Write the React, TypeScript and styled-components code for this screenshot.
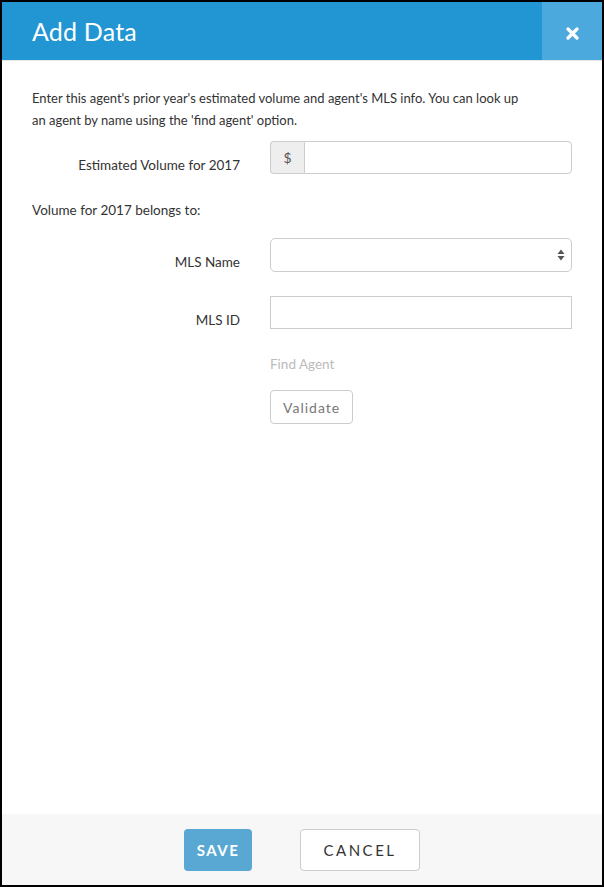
import styled, { createGlobalStyle } from 'styled-components';

const GlobalStyle = createGlobalStyle`
  html, body {
    margin: 0;
    padding: 0;
    background: #000;
  }
  * {
    box-sizing: border-box;
  }
`;

const App = () => {
  return (
    <>
      <GlobalStyle />
      <SModal>
        <SHeader>
          <STitle>Add Data</STitle>
          <SClose aria-label="close">
            <svg width="13" height="13" viewBox="0 0 13 13">
              <path d="M2 2 L11 11 M11 2 L2 11" stroke="#fff" strokeWidth="3.2" strokeLinecap="round" />
            </svg>
          </SClose>
        </SHeader>
        <SBody>
          <SIntro>
            Enter this agent's prior year's estimated volume and agent's MLS info. You can look up an agent by name using the 'find agent' option.
          </SIntro>
          <SRow>
            <SLabel>Estimated Volume for 2017</SLabel>
            <SGroup>
              <SAddon>$</SAddon>
              <SInput $grouped />
            </SGroup>
          </SRow>
          <SNote>Volume for 2017 belongs to:</SNote>
          <SRow $top={20}>
            <SLabel>MLS Name</SLabel>
            <SSelect>
              <svg width="8" height="12" viewBox="0 0 8 12">
                <path d="M4 0.5 L7.5 5 L0.5 5 Z M0.5 7 L7.5 7 L4 11.5 Z" fill="#555" />
              </svg>
            </SSelect>
          </SRow>
          <SRow $top={24}>
            <SLabel>MLS ID</SLabel>
            <SInput />
          </SRow>
          <SActions>
            <SLink>Find Agent</SLink>
            <SValidate>Validate</SValidate>
          </SActions>
        </SBody>
        <SFooter>
          <SSave>SAVE</SSave>
          <SCancel>CANCEL</SCancel>
        </SFooter>
      </SModal>
    </>
  );
};

export default App;

const SModal = styled.div`
  display: flex;
  flex-direction: column;
  width: 604px;
  height: 887px;
  border: 2px solid #000;
  background-color: #fff;
  font-family: Lato, 'Liberation Sans', sans-serif;
  color: #333;
`;
const SHeader = styled.div`
  display: flex;
  justify-content: space-between;
  height: 59px;
  background-color: #2196d3;
  border-bottom: 1px solid #e6e6e6;
`;
const STitle = styled.h1`
  margin: 0;
  padding: 0 0 0 30px;
  line-height: 58px;
  font-size: 25px;
  font-weight: 400;
  color: #fff;
  letter-spacing: 0.2px;
`;
const SClose = styled.div`
  display: flex;
  align-items: center;
  justify-content: center;
  width: 60px;
  height: 58px;
  padding-top: 4px;
  background-color: #4ba9dd;
`;
const SBody = styled.div`
  flex: 1;
  padding: 26px 30px 0 30px;
`;
const SIntro = styled.p`
  margin: 0;
  max-width: 495px;
  font-size: 13px;
  line-height: 22px;
  color: #333;
`;
const SRow = styled.div<{ $top?: number }>`
  display: grid;
  grid-template-columns: 208px 302px;
  column-gap: 30px;
  align-items: center;
  margin-top: ${({ $top }) => $top ?? 10}px;
`;
const SLabel = styled.label`
  padding-top: 14px;
  text-align: right;
  font-size: 13.5px;
  color: #333;
`;
const SGroup = styled.div`
  display: flex;
  height: 33px;
`;
const SAddon = styled.span`
  display: flex;
  align-items: center;
  justify-content: center;
  width: 34px;
  border: 1px solid #ccc;
  border-right: none;
  border-radius: 4px 0 0 4px;
  background-color: #eee;
  font-size: 14px;
  color: #555;
`;
const SInput = styled.div<{ $grouped?: boolean }>`
  flex: 1;
  height: 33px;
  border: 1px solid #ccc;
  border-radius: ${({ $grouped }) => ($grouped ? '0 4px 4px 0' : '0')};
  background-color: #fff;
`;
const SNote = styled.p`
  margin: 28px 0 0;
  font-size: 13.5px;
  color: #333;
`;
const SSelect = styled.div`
  display: flex;
  align-items: center;
  justify-content: flex-end;
  height: 34px;
  padding-right: 6px;
  border: 1px solid #ccc;
  border-radius: 5px;
  background-color: #fff;
`;
const SActions = styled.div`
  display: flex;
  flex-direction: column;
  align-items: flex-start;
  gap: 18px;
  margin: 27px 0 0 238px;
`;
const SLink = styled.span`
  font-size: 13.5px;
  color: #bbb;
`;
const SValidate = styled.button`
  height: 34px;
  padding: 0 12px;
  border: 1px solid #ccc;
  border-radius: 4px;
  background-color: #fff;
  font-family: inherit;
  font-size: 14px;
  letter-spacing: 1px;
  color: #777;
`;
const SFooter = styled.div`
  display: flex;
  justify-content: center;
  align-items: center;
  gap: 48px;
  height: 71px;
  background-color: #f7f7f7;
`;
const SSave = styled.button`
  width: 68px;
  height: 42px;
  border: none;
  border-radius: 4px;
  background-color: #58a8d3;
  font-family: inherit;
  font-size: 15px;
  font-weight: 700;
  letter-spacing: 1.5px;
  color: #fff;
`;
const SCancel = styled.button`
  width: 120px;
  height: 42px;
  border: 1px solid #ccc;
  border-radius: 4px;
  background-color: #fff;
  font-family: inherit;
  font-size: 15px;
  letter-spacing: 2.5px;
  color: #333;
`;
